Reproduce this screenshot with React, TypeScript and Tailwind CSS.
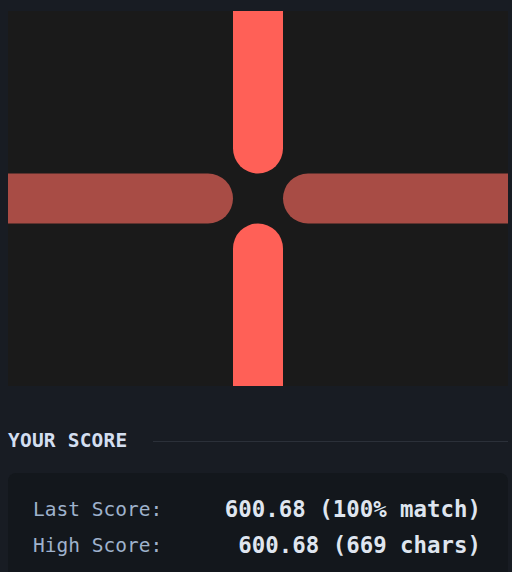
const mono = "font-['DejaVu_Sans_Mono',monospace]";

function TargetCanvas() {
  return (
    <svg viewBox="0 0 400 300" className="block h-[375px] w-[500px]">
      <rect width="400" height="300" fill="#1a1a1a" />
      <path d="M0 130 H160 A20 20 0 0 1 160 170 H0 Z" fill="#a84c45" />
      <path d="M400 130 H240 A20 20 0 0 0 240 170 H400 Z" fill="#a84c45" />
      <path d="M180 0 H220 V110 A20 20 0 0 1 180 110 Z" fill="#ff6057" />
      <path d="M180 300 V190 A20 20 0 0 1 220 190 V300 Z" fill="#ff6057" />
    </svg>
  );
}

const rows = [
  { label: "Last Score:", value: "600.68 (100% match)" },
  { label: "High Score:", value: "600.68 (669 chars)" },
];

export default function App() {
  return (
    <div className={`min-h-screen bg-[#181c23] pl-2 pr-1 pt-[11px] ${mono}`}>
      <TargetCanvas />

      <div className="mt-[40px] flex h-[30px] items-center gap-[26px]">
        <h2 className="text-[19.5px] font-bold tracking-[0.2px] text-[#d3def0]">
          YOUR SCORE
        </h2>
        <div className="h-px flex-1 bg-[#2b3039]" />
      </div>

      <div className="mt-[17px] rounded-lg bg-[#13171c] pb-[18px] pl-[25px] pr-[27px] pt-[19px]">
        {rows.map((r) => (
          <div key={r.label} className="flex h-9 items-center justify-between">
            <span className="text-[19.5px] text-[#9fb2cc]">{r.label}</span>
            <span className="text-[22.4px] font-bold text-[#dfe5ef]">{r.value}</span>
          </div>
        ))}
      </div>
    </div>
  );
}
